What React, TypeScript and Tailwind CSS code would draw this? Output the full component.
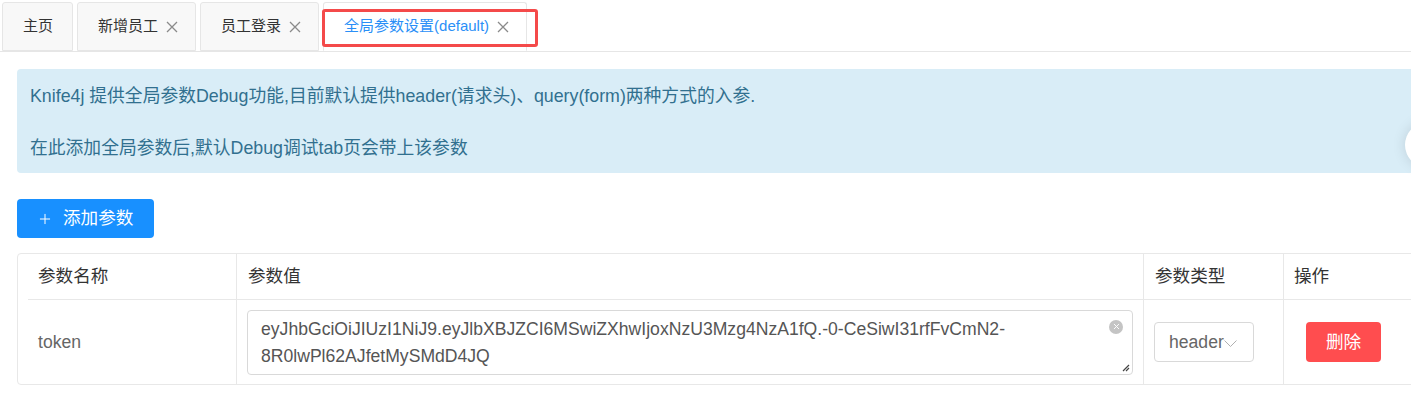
import { Plus, X } from "lucide-react";

const font = "font-['Liberation_Sans','Noto_Sans_CJK_SC',sans-serif]";

const CloseIcon = () => (
  <svg width="12" height="12" viewBox="0 0 12 12" className="mt-[1px]">
    <path d="M1 1 L11 11 M11 1 L1 11" stroke="#8a8a8a" strokeWidth="1.3" />
  </svg>
);

const Tab = ({ label, closable, active }: { label: string; closable?: boolean; active?: boolean }) => {
  return (
    <div
      className={`h-[49px] flex items-center gap-[8px] pl-[20px] border border-[#e6e6e6] rounded-t-[3px] text-[15px] ${
        closable ? "pr-[17px]" : "pr-[19px]"
      } ${active ? "bg-white border-b-white text-[#2a8ff7] relative" : "bg-[#f8f8f8] text-[#333]"}`}
    >
      <span>{label}</span>
      {closable && <CloseIcon />}
      {active && (
        <div className="absolute left-[-2px] top-[6px] w-[216px] h-[38px] border-[3px] border-[#f44a4a] rounded-[3px]" />
      )}
    </div>
  );
};

export default function App() {
  return (
    <div className={`${font} w-[1411px] h-[400px] overflow-hidden bg-white relative`}>
      {/* tabs */}
      <div className="flex items-end pt-[3px] pl-[2px] gap-[4px] border-b border-[#e6e6e6] h-[52px]">
        <Tab label="主页" />
        <Tab label="新增员工" closable />
        <Tab label="员工登录" closable />
        <Tab label="全局参数设置(default)" closable active />
      </div>

      <div className="pl-[17px] pt-[17px] w-[1460px]">
        {/* alert */}
        <div className="bg-[#d9edf7] text-[#31708f] rounded-[4px] pl-[13px] pt-[14px] pb-[12px] text-[17.8px] leading-[26px]">
          <p>Knife4j 提供全局参数Debug功能,目前默认提供header(请求头)、query(form)两种方式的入参.</p>
          <p>&nbsp;</p>
          <p>在此添加全局参数后,默认Debug调试tab页会带上该参数</p>
        </div>

        {/* add button */}
        <button className="mt-[26px] h-[39px] w-[137px] bg-[#1890ff] text-white rounded-[4px] flex items-center pl-[20px] gap-[10px] text-[17.6px]">
          <Plus size={16} strokeWidth={1.5} />
          <span>添加参数</span>
        </button>

        {/* table */}
        <div className="mt-[15px] border border-[#e8e8e8] rounded-[4px] text-[17.6px]">
          <div className="flex h-[46px] items-stretch ml-[10px] border-b border-[#e8e8e8] text-[#333]">
            <div className="w-[209px] border-r border-[#e8e8e8] flex items-center pl-[10px]">参数名称</div>
            <div className="w-[907px] border-r border-[#e8e8e8] flex items-center pl-[11px]">参数值</div>
            <div className="w-[140px] border-r border-[#e8e8e8] flex items-center pl-[11px]">参数类型</div>
            <div className="flex-1 flex items-center pl-[10px]">操作</div>
          </div>
          <div className="flex h-[84px] items-stretch ml-[10px] text-[#666]">
            <div className="w-[209px] border-r border-[#e8e8e8] flex items-center pl-[10px]">token</div>
            <div className="w-[907px] border-r border-[#e8e8e8] flex items-center pl-[10px]">
              <div className="relative w-[886px] h-[65px] border border-[#d9d9d9] rounded-[4px] pl-[13px] pt-[5px] text-[#555] leading-[27px]">
                <div>eyJhbGciOiJIUzI1NiJ9.eyJlbXBJZCI6MSwiZXhwIjoxNzU3Mzg4NzA1fQ.-0-CeSiwI31rfFvCmN2-</div>
                <div>8R0lwPl62AJfetMySMdD4JQ</div>
                <div className="absolute right-[9px] top-[9px] w-[14px] h-[14px] rounded-full bg-[#c4c4c4] flex items-center justify-center">
                  <X size={9} strokeWidth={2.5} className="text-white" />
                </div>
                <svg className="absolute right-[2px] bottom-[2px]" width="9" height="9" viewBox="0 0 9 9">
                  <path d="M8 2 L2 8 M8 5 L5 8" stroke="#444" strokeWidth="1.2" />
                </svg>
              </div>
            </div>
            <div className="w-[140px] border-r border-[#e8e8e8] flex items-center pl-[10px]">
              <div className="w-[100px] h-[40px] border border-[#d9d9d9] rounded-[4px] flex items-center pl-[14px] text-[#666]">
                <span>header</span>
                <svg width="13" height="8" viewBox="0 0 13 8" className="mt-[3px]">
                  <path d="M0.5 0.5 L6.5 6.5 L12.5 0.5" stroke="#b0b0b0" strokeWidth="1" fill="none" />
                </svg>
              </div>
            </div>
            <div className="flex-1 flex items-center pl-[22px]">
              <button className="w-[75px] h-[40px] bg-[#ff4d4f] text-white rounded-[4px] text-[17.6px]">删除</button>
            </div>
          </div>
        </div>
      </div>

      {/* floating circle on right edge */}
      <div className="absolute left-[1405px] top-[122px] w-[46px] h-[46px] rounded-full bg-white shadow-[0_0_14px_rgba(0,0,0,0.12)]" />
    </div>
  );
}
